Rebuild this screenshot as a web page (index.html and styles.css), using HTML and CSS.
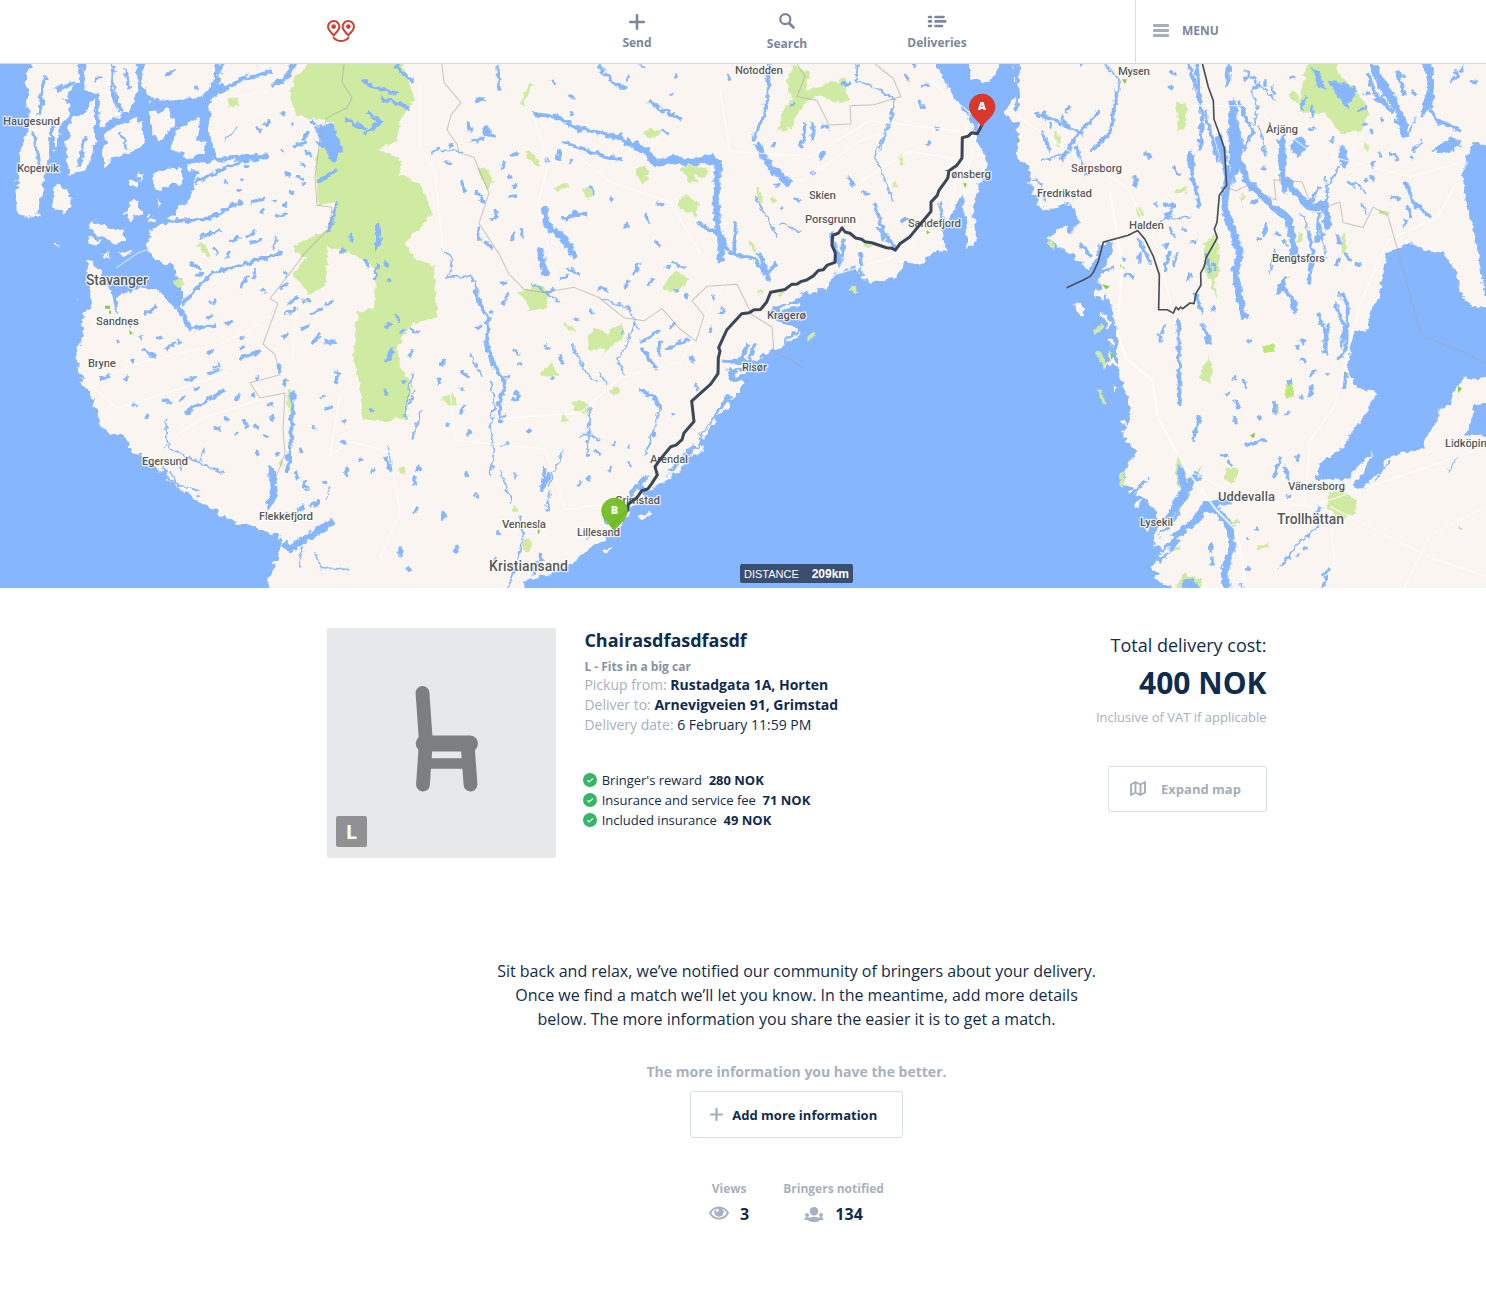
FILE: index.html
```html
<!DOCTYPE html>
<html lang="en">
<head>
<meta charset="utf-8">
<title>Delivery</title>
<link rel="stylesheet" href="styles.css">
</head>
<body>
<header class="topbar">
  <a class="logo"><svg width="28" height="23" viewBox="0 0 28 23" fill="none" stroke="#cf4030" stroke-width="2"><path d="M6.7 15.2C3.5 12 1 9.8 1 6.700a5.700 5.700 0 0 1 11.400 0C12.400 9.800 9.900 12 6.700 15.200zM21.300 15.200C18.100 12 15.600 9.800 15.600 6.700a5.700 5.700 0 0 1 11.400 0C27 9.800 24.500 12 21.300 15.200z"/><path d="M6.500 17.600C10.500 22.200 17.500 22.200 21.500 17.600" stroke-linecap="round"/><circle cx="6.700" cy="6.600" r="2.300" fill="#cf4030" stroke="none"/><circle cx="21.300" cy="6.600" r="2.300" fill="#cf4030" stroke="none"/></svg></a>
  <nav class="nav">
    <a class="nav-item"><svg width="18" height="18" viewBox="0 0 18 18" stroke="#7b879d" stroke-width="2.600" stroke-linecap="round"><path d="M9 2.200v13.600M2.200 9h13.600"/></svg><span>Send</span></a>
    <a class="nav-item nav-search"><svg width="18" height="18" viewBox="0 0 18 18" fill="none" stroke="#7b879d" stroke-width="2.300"><circle cx="7.300" cy="7.200" r="5"/><path d="M11 11l5.300 5.200" stroke-width="2.800"/></svg><span>Search</span></a>
    <a class="nav-item"><svg width="20" height="18" viewBox="0 0 20 18" stroke="#7b879d" stroke-width="2.600" stroke-linecap="round"><path d="M2 4h2M8.500 4h8M2 8.400h2M8.500 8.400h9.800M2 13h2M8.500 13h6.500"/></svg><span>Deliveries</span></a>
  </nav>
  <a class="menu"><svg width="16" height="13" viewBox="0 0 16 13" fill="#a3afbb"><rect width="16" height="3" rx="1"/><rect y="5" width="16" height="3" rx="1"/><rect y="10" width="16" height="3" rx="1"/></svg><span>MENU</span></a>
</header>

<section class="map">
<svg class="map-art" viewBox="0 64 1486 524" preserveAspectRatio="none">
  <defs>
    <filter id="coast" filterUnits="userSpaceOnUse" x="-10" y="50" width="1506" height="550" color-interpolation-filters="sRGB"><feTurbulence type="fractalNoise" baseFrequency=".13" numOctaves="2" seed="4"/><feDisplacementMap in="SourceGraphic" scale="11" xChannelSelector="R" yChannelSelector="G"/></filter>
    <filter id="rough" filterUnits="userSpaceOnUse" x="-10" y="50" width="1506" height="550" color-interpolation-filters="sRGB"><feTurbulence type="fractalNoise" baseFrequency=".17" numOctaves="2" seed="9"/><feDisplacementMap in="SourceGraphic" scale="7" xChannelSelector="R" yChannelSelector="G"/></filter>
  </defs>
  <g transform="translate(0 -.9) scale(1 1.015)">
  <!-- land masses and islands -->
  <g class="land" filter="url(#coast)">
    <path d="M36 50H80L78 80 68 92 70 115 60 125 55 150 45 165 42 185 38 213 28 216 18 212 16 185 20 150 30 125 27 100 27 75zM70 120L85 112 95 97 95 140 90 160 84 170 70 172 66 160zM86 50H135L138 85 135 105 120 115 105 122 98 130 98 95 84 88zM108 128L125 122 136 117 142 130 146 142 140 148 125 152 115 155 103 168 103 150zM145 50H219L213 80 203 97 180 100 150 100 143 82zM152 112L170 108 175 125 170 135 157 142 152 130zM175 130L198 115 205 150 190 156 172 148zM153 172L167 167 182 168 182 180 170 184 157 188 152 180zM55 183L65 185 72 195 66 210 52 204zM128 200L138 198 142 208 133 219 126 214zM90 218L110 226 124 225 124 238 115 242 108 236 96 232 88 226zM88 232l15 7-12 3z"/>
    <path d="M226 50L218 80 212 95 208 115 212 145 218 156 200 160 186 160 188 168 200 170 190 195 175 210 150 230 146 240 152 255 170 261 182 277 182 297 160 283 140 285 122 288 116 310 112 290 105 280 98 262 88 258 87 275 92 300 84 310 82 340 74 350 82 375 95 400 103 425 125 430 132 445 145 452 165 470 175 480 205 497 228 512 235 516 260 523 280 530 280 545 275 560 268 572 272 600H520L526 572 547 568 573 556 597 536 623 515 633 499 657 480 680 463 697 440 717 413 747 379 726 374 728 367 763 352 780 343 797 323 775 318 768 308 800 293 827 283 835 271 855 262 863 277 887 278 900 268 903 257 920 263 933 250 947 248 943 227 953 210 963 193 967 243 977 243 973 210 979 183 988 160 977 140 970 117 953 97 937 67V50zM967 50L972 80 990 83 1006 50z"/>
    <path d="M1012 50L1017 93 1004 113 1018 122 1017 153 1030 170 1033 193 1047 210 1060 202 1073 203 1080 222 1060 227 1048 237 1073 253 1090 267 1100 242 1113 240 1107 260 1097 273 1110 300 1117 327 1117 360 1127 393 1130 413 1123 433 1137 443 1127 460 1122 480 1137 488 1147 493 1157 507 1156 523 1153 540 1167 543 1150 560 1160 573 1182 588V610H1500V50z"/>
    <path d="M1074 299l5 1 6 10-3 4-5-5zM1096 285l10 3-2 8-8-3zM1104 315l9 2-4 10zM1108 347l10 12-8 5zM1112 376l6 7-5 5zM1130 400l4 8-2 12zM785 340l14-14 2 4zM725 395l9-7 1 5zM690 450l10-9 2 5zM92 265h11v6H92zM54 243l6-1-2 3zM75 296l4-1-2 3zM129 177l11 4-5 7-6-5zM137 170l5 4-2 6zM102 251l8 1-5 3zM120 249l12 2-9 3zM148 212l8 3-5 8zM155 198l5 3-2 6z"/>
  </g>
  <!-- protected areas -->
  <g class="park" filter="url(#rough)">
    <path d="M320 50H400L408 82 414 98 400 120 396 140 380 147 402 160 400 172 420 182 433 212 405 240 415 256 434 262 437 313 412 320 397 342 400 362 412 382 405 412 385 416 362 414V390L353 350 358 310 374 303 377 270 366 256 345 249 328 244 325 283 311 292 292 271 306 256 291 243 330 227 335 200 318 203 315 157 335 122 296 115 290 98 294 78 305 68z"/>
    <path d="M1308 60L1335 60 1340 75 1357 90 1369 112 1362 130 1340 132 1324 112 1300 112 1300 97zM1176 102h11l-1 24-7 4zM1204 240l13-8 3 35-5 8 2 22-7-20-6-10zM1200 372l9-22 4 16-4 14zM1225 463l12-1-2 14-10-2zM1329 487l12-5 16 12-4 14-15 4-12-12zM1180 447l5 30 18-19-14 30-12 22-6 0 9-20-5-28zM1177 573l9-7 15 6 4 20h-30zM1289 90l7 2 4 10-8-2zM1175 188l11-4 1 7-10 0zM1241 190l4 5-3 8zM1379 208l11 1-2 5-7-2z"/>
    <path d="M786 81L794 65 810 73 805 90 826 84 845 78 848 100 836 102 823 95 808 100 798 110 792 128 778 130 783 110 792 97zM518 290l20-9 10 6-1 17-17 3-6-13zM588 333l7-9 12 6 14-11 5 13-20 15-7-4-10 4zM540 369l12-10 8 12-18 1zM441 393l12-4 5 11-6 1zM665 280l10-13 14 8-12 15-14-4zM680 168l6-4 22 2-4 10-10-3 5 9-8-2zM680 198l6-6 12 9-1 13-9-5-8-1zM644 132l6-5 9 3-2 8-9-1zM635 168l10-4 6 8-9 10zM525 150l4-2 9 8 3 8-9-1zM478 167l10 0 5 14-5 8-8-14zM553 186l10-5 5 3-9 5zM582 187l6-2 5 9-6 5zM610 385l7-4 5 8-13-1zM565 319l13 8-11-1zM563 407l6 11-8-2zM572 397l16 1 4 10-18-2zM522 536l8-5 1 11-7 3zM513 499l7 5-7 2zM398 462l6-2 2 7-6 1zM228 98l9-1 3 8-12 1zM196 240l8 1 7 13-7-3zM174 277l8-1 1 10-7-1zM288 385l4 0-1 27-4-10zM279 454l4-1-1 10zM227 166l11-4-8 6z"/>
    <path d="M1225 515h15M1138 205l4 10M1258 540l11-3M1343 230l1 20M1300 230v10M1048 237l7 8M1102 320l-7 10M1098 348l8 15M1100 385l4 15M1123 465l-2 15M1180 541l-15 3M1275 396l2 12M1364 145l4 3M850 285l8 2M865 240l5 3M815 330l-8 4M784 288l-5 2M762 288l-5 2M900 155l3 8M893 183l4-2M757 185l4 15M770 195l6 5M750 240l7 9M530 84l-8 20M1055 130l4 15" fill="none" stroke="#cfeaa1" stroke-width="4"/>
    <path class="bright" d="M1262 343l10-4 3 8-11 2zM1285 380l6-3 4 15-9 1z"/>
  </g>
  <path class="wood" d="M105 302h5v3h-5zM109 307h2v3h-2zM129 326l4 3-3 2zM963 181l4 1-2 4zM926 227l4 3-3 2zM1344 367l5 2-5 2zM1250 430l5-3-1 6zM1122 79l5 0-2 5zM1473 140l2 4-3-2zM1458 381l4 3-4 4zM1458 519l5 4-3-1zM1110 348l4 4-3 3zM1102 281l8 2-4 3zM1120 261l6 5-6-2zM1017 134l3 6-3 2zM537 524l3-2-1 6z"/>
  <!-- lakes, fjords and rivers -->
  <g class="water" filter="url(#rough)">
    <path class="fill" d="M1387 250L1410 240 1424 247 1443 250 1457 270 1460 290 1473 303 1500 305V370L1473 374 1463 372 1453 387 1450 400 1440 403 1437 417 1427 430 1423 443 1397 448 1383 455 1385 465 1373 471 1363 484 1353 481 1365 465 1374 445 1362 457 1348 472 1315 474 1320 458 1343 441 1357 420 1377 388 1357 383 1348 367 1350 343 1355 327 1367 327 1370 310 1380 290zM1474 400L1500 395V430L1464 430 1472 415zM1462 172L1473 140 1500 150V310L1484 290 1478 250 1466 200zM1364 50L1388 84 1405 115 1410 135 1403 138 1396 112 1380 90zM1417 50L1432 50 1434 102 1420 118 1428 80zM1462 142L1454 135 1434 148 1430 150 1446 152zM1327 80L1345 83 1357 90 1347 108 1340 98zM1312 67l8 5 5 17-8-4zM1291 142l12-8 5 12-10 10-6-6zM1228 120l5-25 10 50-3 20-8 20-3-35zM1278 140l8-10-1 45 3 18-7-6zM1338 147l6-2 5 12-4 10-5-5zM122 276L148 276 166 284 183 298 176 306 158 286 136 283 124 292zM482 126l5-3 5 8-8 2zM314 126l18-4 10 24-6 16-8-6zM375 222l5-3 2 20-7 10zM268 458l8 10 2 20-8 14-5 2 6-20zM1186 155l6-8 4 20-6 6zM1163 212l8-7 2 8-8 5zM1182 574l10-5 8 10v10h-18z"/>
    <g class="w8"><path d="M702 157l16 4-2 36 2 30 4 10-2 18 2 4M544 205l3 18 16 12 12 20M626 140l20 10 10 12 18-4 20 3 20-5M756 142l16 25 18 15M1232 100l3 50M1218 135l10 40-4 30 8 20 8 25-5 20 6 30 4 15M1240 160l8 20 25 25 15 10 6 30-2 15M1284 175l12 16 15 15 14-4 3 25M540 245l5 27M284 536l8 6M292 540l42-26M1232 494l-26 5 14 8 10 12 2 22-8 24 4 24M1206 499l-14 18-20 14M1180 460l4 22-16 30 20-30 10-15M1178 532l-20 20M205 95l20-8M208 110l-8 30"/></g>
    <g class="w5"><path d="M224 60l-14 35-12 20-30 17M212 95l30-16 30-8M295 60l-10 20-12 4M210 98l-50 5-20-10M146 105l-40 20M160 163l53-5 55-4M195 180l45-20 25-4M145 218l40-18M160 220l50-4 32-17M143 275l25 8 22 42 25-4M182 300l30-30 70-20M97 93l2 80M70 170h-25M52 120v45M80 65l3 25-18 10M33 130l8 40M185 408l42-24M293 386l-2 50-4 30M338 200l-10 30M325 130l10 25M318 180l18-12M365 133l15-12-12-10M345 118l20 10M380 97l30 10M362 80l15 8 20 5M395 65l18 17M533 113l23 3 20 11 40 8 14 8M560 141l22 6 25 9 15 2M648 100l14 9 20 9M598 65l18 20 10 3M474 285l6 15 8 15-1 28 8 20 10 15-6 22 2 18M396 60l5 12M640 338l20-12M657 364l-15-20M640 385l15 8 6 12M736 220l-2 30M698 220l20 12 12 18 25 6 15 22M759 250l8 20 10-10M748 340l-7 15 18 10M722 356l20 2M727 368l28-6M755 340l-6 15M770 60l-4 50-14 30M874 200l10 30 10 15M831 230l8 32 5-25M860 250l2 22M960 90l8-30M966 100l-15-15M1017 60v50M1035 112l30 12 20 10M1060 160l20-30 20-20M1116 90l-5 40-20 20M1196 60l6 60-2 30M1188 60l8 30M1205 110l13 50M1229 60l-2 25M1238 100l15 30-10 20M1190 165l10 40M1178 315l2 85M1202 320l10 20M1170 248l-5 20M1137 235l14 25M1195 290l8 20M1280 450l-5 20M1285 460l4 14M1320 500l-8 15M1328 560l-5 20M1242 575l2 13M1346 370l-2 15M1340 290l8 10-2 45-8 10M1335 300l10 25-5 20M1328 320l-3 30M1318 310l8 20-2 20M1405 180l8 20 18 15M1425 100l12 20 25 10M1397 70l8 25M1368 72l6 20 20 20M1440 145l15 5M1180 505l-20 25M1150 470l-20 20M1200 410l-7 25M1245 440l20-6M1278 280l15 15 2 15M1278 292l8-20M1319 210l-2 30M1308 230l5 20-4 30M660 500l-20-20M625 500l10-18 12-12M700 430l30-40M665 470l30-30M545 462l-3 20 8-15M540 545l2 10M538 555l-5 12M1042 130l8 20M1076 145l10 30M1066 200l5 30M1080 240l12 15M940 200l6 40 12 10M85 135l-6 30M55 90l20-8M115 65l-4 25 10 20M45 75l-6 40"/></g>
    <g class="w3"><path d="M442 245l10 10-2 15-4 4 25-1 8 16M462 150l-20-1M490 470l4-20-4-30 5-20-5-25M500 465l12 30M515 560l8-30-3-20M548 480l15-35M551 485l-5 20M470 350l12 22M625 370l-8-15 10-15 8-25M600 370l8 10M572 340l12 25 12 12M660 405l-15 45M580 430l12 0 8 5M590 400l-3 50M532 280l30 20M600 295l30 10 8 20M895 100l-15 50M858 60l-2 20 25 10 14 10-5 25-12 20-3 10 8 20 10 25M755 195l12 20 10 20M780 220l20 10M1020 170l20 10 5 20M1040 160l30-10M1100 60l20 20-4 25M1160 217l30-2M1408 135l8-20M1320 225l6 30M110 60l8 45M120 130l8 20M165 415l4 25M165 440l30 15 30 12M160 455l10 20 30 10M170 465l10 20M190 450l-10 15M200 455l5-12M205 130l5 20M225 140l12-15M415 385l-10 25M412 370l-5 28-2 15M422 405l-10 28M388 440l4 25M317 525l15-12M315 545l5 15 30 2M330 480l-4 12M300 560l1-20M515 560l-10 25M1390 455l-15 20M1458 450l-10 15M1280 560l20-25 20-18M1245 70l30 30M1250 90l8 15-4 20M1260 125l5 30M1275 245l-5 25M1300 210l10 20M1355 180l10 10M1362 200l5 12M1340 165l-10 15-5 20M1325 175l2 20"/></g>
    <g class="specks"><path d="M165 75l10-5M95 80l5-3M125 70l4 20M195 90l3-2M263 125l8-5M281 115l3-4M257 127l4 3M245 165l4-1M225 180l2 3M238 190l3-3M250 200l15-4M272 200l5-1M276 215l12-4M262 210l3-3M240 180l3-2M290 190l4 1M280 150l2-2M296 175l7 2M300 162l5 3M285 170l4 4M305 180l-3 5M292 145l15-4M310 130l-8 8M315 140l8 3M305 150l6 4M290 125l3-3M310 120l6 3M283 205l4-4M212 215l5-2M200 235l20-8M230 238l10-4M245 235l10-6M250 240l12-2M272 245l5-10M213 245l5 6M228 250v5M190 260l10 6M195 273l8-4M240 285l8-12M253 275l3-8M262 285l2 3M284 270l4 3M280 285l8-5M288 300l10-6M302 298l8-2M285 310l12-5M310 310l12-5M326 303l8-7M283 333l5-4M300 325l8-3M320 330l-8 10M330 337l6 0M225 320l8-2M207 315l6-3M210 300l5-3M145 310l12-7M130 320l2 3M155 335l8-2M165 345l10-6M116 336l2 3M140 335l2-2M178 335l2 4M207 352l5-6M212 363l9-4M238 355l18-7M185 375l12-2M208 370l12-6M195 385l5-2M143 345l12 8M130 355l4 2M100 375l10-4M125 375l3-4M132 400l4-2M145 410l4 2M163 395l8 3M180 395l4-3M165 425l4-4M213 422l7 2M225 415l3-2M234 430l4-3M245 415l2 8M255 420l4 4M271 410l2 6M263 430l5 2M240 345l5-3M253 350l6-4M278 360l2 8M283 380l4-6M335 365l4 5-4 8M323 337l10 3M240 335l4-2M257 370v5M235 395l6-6M253 388l2 5M268 398l5 2M300 443l2 5M295 466l3 6M303 475l5 8M315 500l4-6M327 473l-4 4M346 460l2 12M358 455l5-2M372 466l3-3M385 450l6 16M318 495l-10 5M283 510l5-4M300 505l3-8M341 435l4 3M325 403l6-2M320 390l4 2M342 415l3 2M313 420l2 4M280 445l-5 6M255 450l3-6M340 250l5-5M350 240l2-8M378 260l-4 18M365 255l3 10M385 260l4 4M388 275l2 4M395 310l4 8M385 325l5-6M392 345l-4 10M385 385l2 5M402 375l3 3M370 405l3 2M400 330l5-3M410 325l8 3M413 345l-4 8M385 357l5-5M484 133l12 2M475 100l10-2M498 65l1 25M468 122l4 8M430 150l10-2M445 160l8 2M505 160l-4 8M510 155l8-3M508 173l4 3M475 190l8 4M470 140l15-3M450 145l3-3M461 180l5 12M480 195l3 6M512 185l6-2M498 208l-4 8M515 230l-4 8M520 225l4 10M478 225l2 12M485 240l8 6M490 215l3 3M507 195l10-1M560 148l-2 12M545 160l4-2M570 157l3 4M572 115l-1-5M553 80l3 4M640 65l4 3M567 95l8 4M670 95l3-1M630 75l-4 4M562 216l25-5M573 210l12 2M590 185l5 8M608 195l5 4M624 225l5-3M645 210l3 10M655 200l8 4M660 128l7 5M617 137l5-4M675 77l2-2M728 75l2 5M545 290l10-4M567 265l12 6M560 275l8-2M598 285l10 2M640 260l-8 12M653 275l-5 8M665 263l6 2M672 260l12 5M624 285l5-8M655 240l6 3M675 285l3 4M683 290l5 4M590 305l4 5M575 315l5 2M620 330l3-4M665 345l25-10M660 335l-2 16M675 340l10-4M690 350l4 8M710 328l2-5M695 378l3 8M713 292l3 4M724 305l-4 5M560 350l3 10M545 342l5 2M550 375l3-3M500 280l8-1M508 290l-5 10M490 308l4 2M475 325l8-4M462 365l5 8M445 355l-5 6M440 372l-2 8M513 345l7 5M517 360l5 1M515 385l4 8M512 395l8-1M506 410l-4 2M527 427l3-3M500 440l8-2M506 375l3-3M460 385l3-2M465 400l-5 8M470 425l-3 5M445 420l3-2M468 465l-2 6M512 468l4 2M420 460l-4 6M415 470v10M417 500l-3 6M443 505l1 8M455 545l3-6M400 540v10M407 560l3 4M475 490l3-3M588 470l2 5M578 480l3-6M595 445l5 4M612 440l3-4M609 465l2-5M627 440l3 2M628 455l4 6M610 510l8 0M588 530l5-3M602 507l5 10M652 425l3 6M672 410l3-2M645 390l4 2M670 325l5-6M500 525l-3 3M493 555l4-4M840 85l10-2M790 105l5-2M813 120v20M805 122l-2 20M822 125l8 3M800 140l3 8M825 150l-6 8M775 140l-2 6M783 205l-2 3M795 195l5 5M810 170l6 3M848 175l5 10M862 190l8 3M905 75l5 5M922 85l8 0M920 100l3 8M938 125v5M913 60l3 8M907 215l-6 6M878 225l6 12M775 185l4-3M930 140l-4 4M1080 62l2 3M1060 115l5 8M1050 122v6M1070 105l-4 8M1045 110l-2 8M1170 70l6 5M1168 85l4 4M1145 150l5 8M1135 175v10M1173 165l5 8M1190 155l-2 6M1245 80l5-5M1252 88l8-3M1265 80v5M1272 85l3 10M1290 75l5 3M1305 95l-3 15M1312 105v12M1310 130l5-4M1330 140l5-2M1357 110l10-3M1362 125l6-3M1370 132l2-4M1380 120l3-2M1390 150l8 8M1378 155l3-2M1375 160l-3 6M1370 175l5 3M1363 180l4-3M1390 195l10 2M1348 180l7 4M1320 185l-10 15M1262 165l4 2M1250 200l8-2M1265 200l6-3M1267 220l-4 14M1275 230l5 3M1258 235l2 3M1284 238l2 5M1320 235l4-5M1337 230l3 12M1345 250l5 8M1355 260l6 3M1340 255l-4 8M1178 250l-5 14M1190 240l5-2M1182 225l4 4M1170 225l5 10M1167 240l-3 5M1155 200l4 4M1163 202l14 2M1190 270l-3 8M1206 250l4 20M1213 260l3 8M1140 250v12M1121 255l4 3M1125 270l8 3M1100 268l14-4M1158 330l4 8M1165 320l-3 10M1205 332l3 8M1212 302l2 6M1234 375l2-4M1225 390l5-2M1243 375l3 10M1247 335l4 3M1300 335l6 3M1297 345l3-4M1300 355l6 3M1315 365l-7 8M1327 367v4M1288 375l3 4M1313 380l-4 12M1302 390l-2 4M1236 395l3 8M1235 410l1 8M1258 410l2 4M1275 395v15M1285 410l5-3M1299 448l-3 8M1285 465l5 6M1286 490l5 0M1228 455l4 5M1220 450l8-2M1247 530l3 3M1255 520l3 4M1302 540l6 2M1298 545l-1 4M1305 530l5-2M1212 535l-2 10M1212 550v8M1247 560l3 4M1375 100l15-8M1365 95l5-3M1455 70l4 8M1450 80l10-3M1402 75l4 3M1412 90l4 5M1464 65l-4 8M1470 80l8 2M1412 150l10-10M1410 155l3 2M1395 120l6 3M1407 205l4 10M1403 225l3-8"/></g>
  </g>
  <g class="islets" filter="url(#rough)"><path d="M1145 475l15-20M1135 500l6-8M1185 530l4-8M1160 530l8-6M1110 335l4 6M1105 362l5-3M1122 415l5 8M1145 520l3 3M1160 548l10-6M1100 310l6 3M735 370l15-5M700 428l12-16M655 478l15-13M640 512l10-5M605 545l8-5M780 305l20-4M790 295l12-4"/></g>
  <!-- roads and borders -->
  <path class="road" d="M110 64l-2 20M210 100l60-10M110 370l30-12 80-18 40-20M82 373l35 30 50-15 60-20M175 430l30-18 70-22M292 355l5-55 30-18M340 390l-10 60 20-14 40 10 10 60-20 45M420 85v60l15 25 8 80M533 113l15 50-10 40 20 80M450 385l5 50 90 8 20 60 80-10M500 413l80-5 40-35 60-15 45-80M560 140l50 40 60 20 30 50M720 90l10 60 80 5 60-35 90 10M800 180l60-40 40-15M970 110l-20 100-60 45-100 30M1017 115l60 40 50 30 30 60 15 60 5 20M1180 460l60 30 70 10 90-30 90-30M1310 575l25-12-5-60M1305 500l5-65 25-35 10-40 15-60 28-62 50-24 30-54M1190 105l60 0 60 45M1330 155l80 20 55-15M1330 500l100 50 60 20M1400 588l30-60 60-30M930 80l50 40-15 60M860 180l50-30 60 10"/>
  <path class="road bridge" d="M116 265l22-15 12-4"/>
  <path class="road wide" d="M1110 190l12 70-5 70 10 25 25 20 6 38 28 50 30 40 20 20 8 40-2 30"/>
  <path class="border" d="M344 64l-2 18 10 15-5 10-20 10-7 20-5 38 2 28 15 2-2 20-25 25-15 20-20 25 8 5-15 40 12 10 5 20-30 8 10 15 25-5-2 35 2 25-10 25M442 64l2 18 17 20-10 12-4 15 10 14 2 8 15 5 15 35-10 30 20 30 10 20 15 15 20 3 30-5 25 10 25 20 20 3 18-12 18 20 16 12 8-25-12-15 15-14 30-2 15 30 20 12 2 25 18 8 12 8M797 64l8 12-8 20 20 4 12 24 22-1-1-18 24-1 27-8-8-18-18-14M1226 185l10 4 10-5 30 14-2-20 28 2 8 20 15 5 15-5 3 20 20 5 10-20 15 8 5 18 6 20 22 80 45 18 28 15"/>
  </g>
  <!-- place names -->
  <g class="labels">
    <text x="3" y="125" textLength="57">Haugesund</text><text x="17" y="171.500" textLength="42">Kopervik</text><text class="city" x="86" y="284.500" textLength="62">Stavanger</text><text x="96" y="325" textLength="43">Sandnes</text><text x="88" y="366.500" textLength="28">Bryne</text><text x="142" y="465" textLength="46">Egersund</text><text x="259" y="519.500" textLength="54">Flekkefjord</text><text x="502" y="528" textLength="44">Vennesla</text><text x="577" y="535.500" textLength="43">Lillesand</text><text class="city" x="489" y="571" textLength="79">Kristiansand</text><text x="735" y="73.500" textLength="48">Notodden</text><text x="809" y="199" textLength="27">Skien</text><text x="805" y="223" textLength="51">Porsgrunn</text><text x="767" y="318.500" textLength="39">Kragerø</text><text x="742" y="371" textLength="25">Risør</text><text x="1118" y="74.500" textLength="32">Mysen</text><text x="1071" y="172" textLength="51">Sarpsborg</text><text x="1037" y="197" textLength="55">Fredrikstad</text><text x="1129" y="228.500" textLength="35">Halden</text><text x="1266" y="133" textLength="32">Årjäng</text><text x="1272" y="262" textLength="53">Bengtsfors</text><text x="1445" y="447" textLength="48">Lidköping</text><text x="1288" y="489.500" textLength="57">Vänersborg</text><text class="city mid" x="1218" y="501" textLength="57">Uddevalla</text><text class="city" x="1277" y="524" textLength="67">Trollhättan</text><text x="1140" y="526" textLength="33">Lysekil</text>
    <text x="945" y="178" textLength="46">Tønsberg</text><text x="908" y="227" textLength="53">Sandefjord</text><text x="650" y="462.500" textLength="38">Arendal</text><text x="615" y="504" textLength="45">Grimstad</text>
  </g>
  <!-- country border in the east, then the delivery route -->
  <path class="rail" transform="translate(1090 60) scale(.3333 .3384)" d="M337 10L355 80 370 120 372 175 385 210 403 260 410 370 388 400 381 480 373 500 382 525 348 585 343 610 332 630 333 665 318 690 312 720 300 718 278 735 272 730 265 738 258 730 250 748 232 738 206 738 208 635 190 580 165 530 143 504 115 518 40 538 25 595 10 628 0 640 -20 650 -70 673"/>
  <path class="route" transform="translate(740 60) scale(.3333 .3384)" d="M727 190L712 218 695 215 685 225 667 230 666 290 650 312 627 327 623 350 597 385 592 400 573 420 573 448 545 480 510 522 480 543 466 562 455 556 440 555 395 540 375 537 365 530 347 526 330 512 315 508 306 496 295 512 278 518 276 548 286 570 285 598 262 606 250 620 235 622 220 638 200 650 182 655 172 662 155 663 135 678 92 686 80 715 62 737 42 738 28 747 5 750 -40 798 -64 850 -60 860 -65 880 -66 927 -88 958 -145 1008 -138 1068 -168 1102 -174 1122 -192 1138 -208 1143 -235 1175 -250 1195 -255 1202 -248 1226 -265 1252 -277 1268 -295 1273 -308 1292 -335 1313 -337 1330 -388 1378"/>
  <path fill="#d8392c" d="M982 127.500C979 121 969 116 969 107a13.200 13.200 0 0 1 26.400 0C995.400 116 985 121 982 127.500z"/>
  <path fill="#72bf22" fill-opacity=".96" d="M614.500 531C611 525 601.300 520 601.300 511a13.200 13.200 0 0 1 26.400 0C627.700 520 618 525 614.500 531z"/>
  <g class="pins"><text x="982" y="109.500">A</text><text x="614.500" y="513.800">B</text></g>
</svg>
<div class="distance"><span>DISTANCE</span><strong>209km</strong></div>
</section>

<main class="page">
  <section class="summary">
    <div class="thumb">
      <svg class="chair" width="64" height="108" viewBox="0 0 64 108" fill="none" stroke="#7d7e80" stroke-linecap="round"><path stroke-width="13.800" d="M7.500 8L11 58M10.800 58L8 99.500M52.500 58L55.500 99.500"/><path stroke-width="16" d="M8.800 58.500H55"/><path stroke-width="10.500" stroke-linecap="butt" d="M12 78.500H54"/></svg>
      <span class="size">L</span>
    </div>
    <div class="details">
      <h1>Chairasdfasdfasdf</h1>
      <div class="fits">L - Fits in a big car</div>
      <div class="row">Pickup from: <b>Rustadgata 1A, Horten</b></div>
      <div class="row">Deliver to: <b>Arnevigveien 91, Grimstad</b></div>
      <div class="row">Delivery date: <span>6 February 11:59 PM</span></div>
      <ul class="fees">
        <li><svg width="14" height="14" viewBox="0 0 14 14"><circle cx="7" cy="7" r="7" fill="#32b865"/><path d="M4.300 7.200l1.800 1.700 3.700-3.400" fill="none" stroke="#fff" stroke-width="1.300"/></svg>Bringer's reward <b>280 NOK</b></li>
        <li><svg width="14" height="14" viewBox="0 0 14 14"><circle cx="7" cy="7" r="7" fill="#32b865"/><path d="M4.300 7.200l1.800 1.700 3.700-3.400" fill="none" stroke="#fff" stroke-width="1.300"/></svg>Insurance and service fee <b>71 NOK</b></li>
        <li><svg width="14" height="14" viewBox="0 0 14 14"><circle cx="7" cy="7" r="7" fill="#32b865"/><path d="M4.300 7.200l1.800 1.700 3.700-3.400" fill="none" stroke="#fff" stroke-width="1.300"/></svg>Included insurance <b>49 NOK</b></li>
      </ul>
    </div>
    <div class="cost">
      <div class="cost-label">Total delivery cost:</div>
      <div class="price">400 NOK</div>
      <div class="vat">Inclusive of VAT if applicable</div>
      <a class="button expand"><svg width="16" height="15" viewBox="0 0 16 15" fill="none" stroke="#a3aebb" stroke-width="1.900" stroke-linejoin="round"><path d="M1 3.500L5.500 1l5 2.500L15 1v10.500L10.500 14l-5-2.500L1 14zM5.500 1v10.500M10.500 3.500V14"/></svg><span>Expand map</span></a>
    </div>
  </section>

  <section class="status">
    <p class="message">Sit back and relax, we’ve notified our community of bringers about your delivery.<br>Once we find a match we’ll let you know. In the meantime, add more details<br>below. The more information you share the easier it is to get a match.</p>
    <p class="hint">The more information you have the better.</p>
    <a class="button add"><svg width="13" height="13" viewBox="0 0 13 13" stroke="#a7b0bd" stroke-width="2.200" stroke-linecap="round"><path d="M6.500 1v11M1 6.500h11"/></svg><span>Add more information</span></a>
    <div class="stats">
      <div class="stat"><span>Views</span><div><svg class="eye" width="20" height="14" viewBox="0 0 20 14"><path d="M1 7C5-.5 15-.5 19 7 15 14.500 5 14.500 1 7z" fill="none" stroke="#a8b1bf" stroke-width="1.900"/><circle cx="10" cy="6" r="4.700" fill="#a8b1bf"/><circle cx="8.300" cy="4.300" r="1.600" fill="#fff"/></svg><b>3</b></div></div>
      <div class="stat"><span>Bringers notified</span><div><svg width="20" height="15" viewBox="0 0 20 15" fill="#a8b1bf"><circle cx="10" cy="4.300" r="4.300"/><circle cx="3" cy="8" r="2"/><circle cx="17" cy="8" r="2"/><path d="M.500 13c0-3 3-3.500 5-2.300 2.500-1.200 6.500-1.200 9 0 2-1.200 5-.7 5 2.300h-3.500c-1 2.700-11 2.700-12 0z"/></svg><b>134</b></div></div>
    </div>
  </section>
</main>
</body>
</html>
```
FILE: styles.css
```css
* { box-sizing: border-box; }
body { margin: 0; background: #fff; color: #0f2c4e; font-family: "Open Sans", sans-serif; min-height: 1305px; }
svg { display: block; }
.topbar { display: flex; height: 64px; padding-left: 327px; border-bottom: 1px solid #d4d8e2; }
.logo { width: 235px; padding-top: 19.600px; }
.nav { display: flex; width: 573px; }
.nav-item { display: flex; flex-direction: column; align-items: center; width: 150px; padding-top: 13px; font-size: 12px; line-height: 16px; font-weight: 700; color: #7b879d; }
.nav-item span { margin-top: 4px; }
.nav-search { padding-top: 12px; }
.nav-search span { margin-top: 6px; }
.menu { display: flex; align-items: flex-start; gap: 13px; padding: 24px 0 0 17px; border-left: 1px solid #d9dee9; font-size: 12px; line-height: 14px; font-weight: 700; color: #7b879d; }
.map { position: relative; height: 524px; overflow: hidden; background: #86b6fe; }
.map-art { width: 100%; height: 100%; }
.land { fill: #faf5f1; }
.park { fill: #cfeaa1; }
.park .bright { fill: #bbe877; }
.wood { fill: #86cf3c; }
.water { fill: none; stroke: #86b6fe; stroke-linejoin: round; }
.water .fill { fill: #86b6fe; stroke: none; }
.w8 { stroke-width: 7; }
.w5 { stroke-width: 3.700; }
.w3 { stroke-width: 1.700; }
.specks { stroke-width: 3.300; }
.islets { fill: none; stroke: #faf5f1; stroke-width: 3; }
.road { fill: none; stroke: #fff; stroke-opacity: .75; stroke-width: 1.200; stroke-linejoin: round; }
.road.wide { stroke-width: 2.200; }
.road.bridge { stroke: #e3edfb; }
.border { fill: none; stroke: #a8a4a4; stroke-opacity: .6; stroke-width: 1; stroke-linejoin: round; }
.rail { fill: none; stroke: #4b5057; stroke-width: 5; stroke-linejoin: round; }
.route { fill: none; stroke: #3b4658; stroke-width: 9; stroke-linejoin: round; }
.labels { font: 500 11.500px Roboto, sans-serif; fill: #595959; stroke: #fff; stroke-opacity: .75; stroke-width: 2.500px; stroke-linejoin: round; paint-order: stroke; }
.labels .city { font-size: 14px; }
.labels .mid { font-size: 13px; }
.pins { font: 800 11px "Open Sans", sans-serif; fill: #fff; text-anchor: middle; }
.distance { position: absolute; left: 740px; top: 500px; display: flex; align-items: center; justify-content: space-between; width: 113px; height: 19px; padding: 0 4px; border-radius: 2px; background: #3a4f6f; color: #fff; font: 11px "Liberation Sans", sans-serif; }
.distance strong { font-size: 12px; }
.page { width: 940px; margin-left: 327px; padding-top: 40px; }
.summary { display: flex; height: 230px; }
.thumb { display: flex; flex-direction: column; align-items: flex-start; width: 229px; height: 230px; padding: 57px 0 0 9px; border-radius: 2px; background: #e7e8ea; }
.chair { margin-left: 79px; }
.size { width: 31px; height: 31px; margin-top: 23px; border-radius: 2px; background: #919193; color: #fff; font-size: 20px; line-height: 31px; font-weight: 700; text-align: center; }
.details { flex: 1; padding-left: 28.400px; }
h1 { margin: 0 0 6px; font-size: 18px; line-height: 25px; }
.fits { font-size: 12px; line-height: 16px; font-weight: 700; color: #8790a5; }
.row { font-size: 14px; line-height: 20px; color: #a6b0bc; }
.row b, .row span { color: #0f2c4e; }
.fees { margin: 35px 0 0 -1.400px; padding: 0; list-style: none; font-size: 13px; line-height: 20px; }
.fees li { display: flex; align-items: center; }
.fees svg { margin-right: 4.700px; }
.fees b { margin-left: 6.700px; }
.cost { display: flex; flex-direction: column; align-items: flex-end; padding-top: 5px; text-align: right; }
.cost-label, .price, .vat { padding-right: .5px; }
.cost-label { font-size: 18px; line-height: 25px; }
.price { font-size: 30px; line-height: 42px; margin-top: 4px; font-weight: 700; }
.vat { margin-top: 4px; font-size: 13px; line-height: 18px; color: #a6b0bc; }
.button { display: flex; align-items: center; border: 1px solid #d7dce7; border-radius: 3px; font-size: 13px; font-weight: 700; }
.expand { width: 159px; height: 46px; margin-top: 40px; padding-left: 21px; gap: 15px; color: #a3aebb; }
.expand svg { margin-top: -2px; }
.status { display: flex; flex-direction: column; align-items: center; width: 939px; padding-top: 101px; }
.message { margin: 0; font-size: 16px; line-height: 24px; text-align: center; }
.hint { margin: 31px 0 9px; font-size: 14px; line-height: 20px; font-weight: 700; color: #a7b1bf; }
.add { width: 213px; height: 47px; padding-left: 19px; gap: 9.300px; }
.stats { display: flex; gap: 34px; margin-top: 43px; }
.stat { display: flex; flex-direction: column; align-items: center; font-size: 12px; line-height: 16px; font-weight: 700; color: #a7b1bf; }
.stat div { display: flex; align-items: center; gap: 11px; margin-top: 6px; }
.stat b { color: #0f2c4e; font-size: 16px; line-height: 22px; font-weight: 700; }
.eye { margin-top: -3px; }
```
